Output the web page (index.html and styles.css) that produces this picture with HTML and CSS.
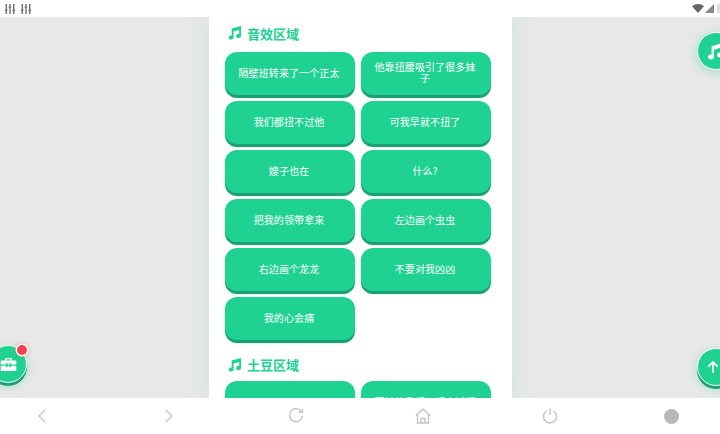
FILE: index.html
```html
<!DOCTYPE html>
<html lang="zh-CN">
<head>
    <meta charset="UTF-8">
    <meta name="viewport" content="width=device-width, initial-scale=1.0">
    <title>音效</title>
    <link rel="stylesheet" href="styles.css">
</head>
<body>
    <div class="status-bar">
        <div class="status-left">
            <svg class="tune-icon" viewBox="0 0 10 10"><path d="M.5 0h1.500v10H.5zM4.200 0h1.500v10H4.200zM8 0h1.500v10H8zM0 5.500h2.500v1.500H0zM3.700 2.500h2.500V4H3.700zM7.500 5.500H10v1.500H7.500z"/></svg>
            <svg class="tune-icon" viewBox="0 0 10 10"><path d="M.5 0h1.500v10H.5zM4.200 0h1.500v10H4.200zM8 0h1.500v10H8zM0 5.500h2.500v1.500H0zM3.700 2.500h2.500V4H3.700zM7.500 5.500H10v1.500H7.500z"/></svg>
        </div>
        <div class="status-right">
            <svg class="wifi-icon" viewBox="0 0 12 9"><path d="M0 2.200C3.400-.700 8.600-.700 12 2.200L6 9z"/></svg>
            <svg class="signal-icon" viewBox="0 0 9 9"><path d="M9 0v9H0z"/></svg>
            <span class="battery"></span>
        </div>
    </div>

    <div class="stage">
        <div class="panel">
            <h2 class="section-title">
                <svg class="note-icon" viewBox="0 0 16 15"><path d="M5 2.800 15 0v10.600a2.600 2.200 0 1 1-2-2.100V4.300L7 6v6.300a2.600 2.200 0 1 1-2-2.100z"/></svg>
                音效区域
            </h2>
            <div class="sound-grid">
                <button class="sound-btn">隔壁班转来了一个正太</button>
                <button class="sound-btn">他靠扭腰吸引了很多妹子</button>
                <button class="sound-btn">我们都扭不过他</button>
                <button class="sound-btn">可我早就不扭了</button>
                <button class="sound-btn">嫂子也在</button>
                <button class="sound-btn">什么?</button>
                <button class="sound-btn">把我的领带拿来</button>
                <button class="sound-btn">左边画个虫虫</button>
                <button class="sound-btn">右边画个龙龙</button>
                <button class="sound-btn">不要对我凶凶</button>
                <button class="sound-btn">我的心会痛</button>
            </div>
            <h2 class="section-title section-title-tight">
                <svg class="note-icon" viewBox="0 0 16 15"><path d="M5 2.800 15 0v10.600a2.600 2.200 0 1 1-2-2.100V4.300L7 6v6.300a2.600 2.200 0 1 1-2-2.100z"/></svg>
                土豆区域
            </h2>
            <div class="sound-grid">
                <button class="sound-btn"></button>
                <button class="sound-btn">那就让我们一起来摇摆</button>
            </div>
        </div>

        <button class="fab fab-music">
            <svg class="fab-note" viewBox="0 0 16 15"><path d="M5 2.800 15 0v10.600a2.600 2.200 0 1 1-2-2.100V4.300L7 6v6.300a2.600 2.200 0 1 1-2-2.100z"/></svg>
        </button>
        <button class="fab fab-up">
            <svg class="fab-arrow" viewBox="0 0 14 16"><path d="M7 15V2M1.500 7.500 7 2l5.500 5.500"/></svg>
        </button>
        <button class="fab fab-tools">
            <svg class="fab-case" viewBox="0 0 18 15"><path d="M6 0h6a1 1 0 0 1 1 1v2h4a1 1 0 0 1 1 1v3.500H12V6h-2v1.500H8V6H6v1.500H0V4a1 1 0 0 1 1-1h4V1a1 1 0 0 1 1-1zm.500 1.500V3h5V1.500zM0 9h6v1.500h2V9h2v1.500h2V9h6v5a1 1 0 0 1-1 1H1a1 1 0 0 1-1-1z"/></svg>
            <span class="red-dot"></span>
        </button>
    </div>

    <div class="nav-bar">
        <svg class="nav-icon" viewBox="0 0 20 20"><path d="M13 4 7 10l6 6"/></svg>
        <svg class="nav-icon" viewBox="0 0 20 20"><path d="m7 4 6 6-6 6"/></svg>
        <svg class="nav-icon" viewBox="0 0 20 20"><path d="M15.500 5.500A6.500 6.500 0 1 0 16.500 10M16.500 3v3.200h-3.200"/></svg>
        <svg class="nav-icon" viewBox="0 0 20 20"><path d="M3 9.500 10 3l7 6.500M4.500 8.500V17h11V8.500M8 17v-4.500h4V17"/></svg>
        <svg class="nav-icon" viewBox="0 0 20 20"><path d="M6.500 5a6.500 6.500 0 1 0 7 0M10 2.500V9"/></svg>
        <span class="nav-dot"></span>
    </div>
</body>
</html>
```

FILE: styles.css
```css
* {
    box-sizing: border-box;
}

html, body {
    height: 100%;
}

body {
    margin: 0;
    display: flex;
    flex-direction: column;
    overflow: hidden;
    font-family: "Noto Sans CJK SC", "Liberation Sans", sans-serif;
    background-color: #fff;
}

.status-bar {
    height: 17px;
    display: flex;
    justify-content: space-between;
    align-items: center;
    padding-left: 5px;
    overflow: hidden;
}

.status-left {
    display: flex;
    gap: 6px;
}

.tune-icon {
    width: 10px;
    height: 10px;
    fill: #777;
}

.status-right {
    display: flex;
    align-items: center;
    gap: 1px;
    margin-right: -4px;
}

.wifi-icon {
    width: 12px;
    height: 9px;
    fill: #666;
}

.signal-icon {
    width: 9px;
    height: 9px;
    fill: #888;
}

.battery {
    width: 7px;
    height: 9px;
    margin-left: 2px;
    background-color: #ddd;
}

.stage {
    position: relative;
    flex: 1;
    min-height: 0;
    overflow: hidden;
    display: flex;
    justify-content: center;
    background-color: #e8e8e8;
}

.panel {
    width: 303px;
    margin-left: 1px;
    padding: 5px 16px 0;
    background-color: #fff;
    box-shadow: 0 0 20px 4px #d5e5df;
}

.section-title {
    height: 22px;
    margin: 0 0 7.500px;
    display: flex;
    align-items: center;
    gap: 5px;
    padding-left: 2px;
    font-size: 13px;
    font-weight: 700;
    color: #20d291;
}

.section-title-tight {
    margin-bottom: 5px;
}

.note-icon {
    width: 15px;
    height: 14px;
    fill: #20d291;
}

.sound-grid {
    display: grid;
    grid-template-columns: 130px 130px;
    gap: 6.200px 6px;
    margin-bottom: 13.500px;
}

.sound-btn {
    height: 43px;
    padding: 0 11px 2px 9px;
    border: none;
    border-radius: 12px;
    background-color: #20d291;
    box-shadow: 0 3px 0 #1d9f74, 0 3px 3px rgba(32, 210, 145, 0.3);
    color: #fff;
    font-family: inherit;
    font-size: 10px;
    letter-spacing: 0.1px;
    line-height: 11px;
}

.fab {
    position: absolute;
    width: 38px;
    height: 38px;
    padding: 0;
    display: flex;
    align-items: center;
    justify-content: center;
    border: 1.500px solid #fff;
    border-radius: 50%;
    background-color: #20d291;
}

.fab-music {
    top: 15px;
    right: -15px;
    box-shadow: 0 2px 10px rgba(32, 210, 145, 0.4);
    justify-content: flex-start;
    padding-left: 8px;
}

.fab-note {
    width: 18px;
    height: 17px;
    flex: none;
    fill: #fff;
}

.fab-up {
    top: 331px;
    right: -15px;
    box-shadow: 0 3px 0 #1d9f74, 0 3px 8px rgba(32, 210, 145, 0.4);
    justify-content: flex-start;
    padding-left: 9px;
}

.fab-arrow {
    width: 12px;
    height: 14px;
    flex: none;
    fill: none;
    stroke: #fff;
    stroke-width: 2;
}

.fab-tools {
    top: 328px;
    left: -11px;
    box-shadow: 0 3px 0 #1d9f74, 0 3px 8px rgba(32, 210, 145, 0.4);
}

.fab-case {
    width: 17px;
    height: 13px;
    fill: #fff;
}

.red-dot {
    position: absolute;
    top: -1px;
    left: 27px;
    width: 10px;
    height: 10px;
    border-radius: 50%;
    background-color: #f9404f;
    box-shadow: 0 0 0 1.500px #fff, 0 0 4px 2px rgba(249, 64, 79, 0.3);
}

.nav-bar {
    height: 36px;
    display: flex;
    align-items: center;
    gap: 107px;
    padding-left: 32px;
}

.nav-icon {
    width: 20px;
    height: 20px;
    flex: none;
    fill: none;
    stroke: #c4c4c4;
    stroke-width: 1.400;
}

.nav-dot {
    width: 15px;
    height: 15px;
    flex: none;
    margin-left: -3px;
    border-radius: 50%;
    background-color: #b8b8b8;
}
```
